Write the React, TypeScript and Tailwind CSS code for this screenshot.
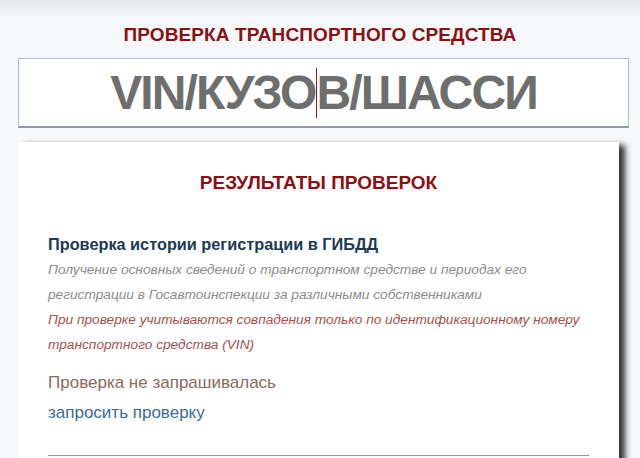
export default function App() {
  return (
    <div
      className="relative w-[640px] h-[458px] overflow-hidden bg-[#f6f8f9] bg-gradient-to-b from-[#e4e6e8] via-[#f6f8f9] via-[4%] to-[#f6f8f9]"
      style={{ fontFamily: '"Liberation Sans", Arial, sans-serif' }}
    >
      <h1 className="pt-[24px] text-center text-[19px] leading-[22px] font-bold text-[#8a1014] tracking-[0.1px]">
        ПРОВЕРКА ТРАНСПОРТНОГО СРЕДСТВА
      </h1>

      <div className="ml-[18px] mt-[12px] w-[611px] h-[70px] bg-white border border-[#a8c0da] border-b-2 border-b-[#8d9aa8] flex items-center justify-center">
        <span className="text-[48px] leading-none font-bold text-[#6e6e6e] tracking-[-1.9px]">
          VIN/КУЗО
        </span>
        <span className="w-[1px] h-[50px] bg-[#8a1a2a]" />
        <span className="text-[48px] leading-none font-bold text-[#6e6e6e] tracking-[-1.9px]">
          В/ШАССИ
        </span>
      </div>

      <div className="ml-[18px] mt-[14px] w-[601px] h-[400px] bg-white shadow-[6px_3px_6px_rgba(0,0,0,0.8)] px-[30px]">
        <h2 className="pt-[29px] text-center text-[19px] leading-[24px] font-bold text-[#8a1014]">
          РЕЗУЛЬТАТЫ ПРОВЕРОК
        </h2>

        <div className="mt-[38px]">
          <h3 className="text-[16.3px] leading-[22px] font-bold text-[#1b3a57]">
            Проверка истории регистрации в ГИБДД
          </h3>
          <p className="mt-[2px] text-[13.7px] leading-[25px] italic text-[#8c8c8c]">
            Получение основных сведений о транспортном средстве и периодах его регистрации в Госавтоинспекции за различными собственниками
          </p>
          <p className="text-[13.7px] leading-[25px] italic text-[#a4504f]">
            При проверке учитываются совпадения только по идентификационному номеру транспортного средства (VIN)
          </p>
          <p className="mt-[14px] text-[17px] leading-[24px] text-[#8a6a62]">
            Проверка не запрашивалась
          </p>
          <a className="block mt-[6px] text-[17px] leading-[24px] text-[#3a6b96]">
            запросить проверку
          </a>
          <div className="mt-[30px] border-t border-[#9a9a9a]" />
        </div>
      </div>
    </div>
  )
}
